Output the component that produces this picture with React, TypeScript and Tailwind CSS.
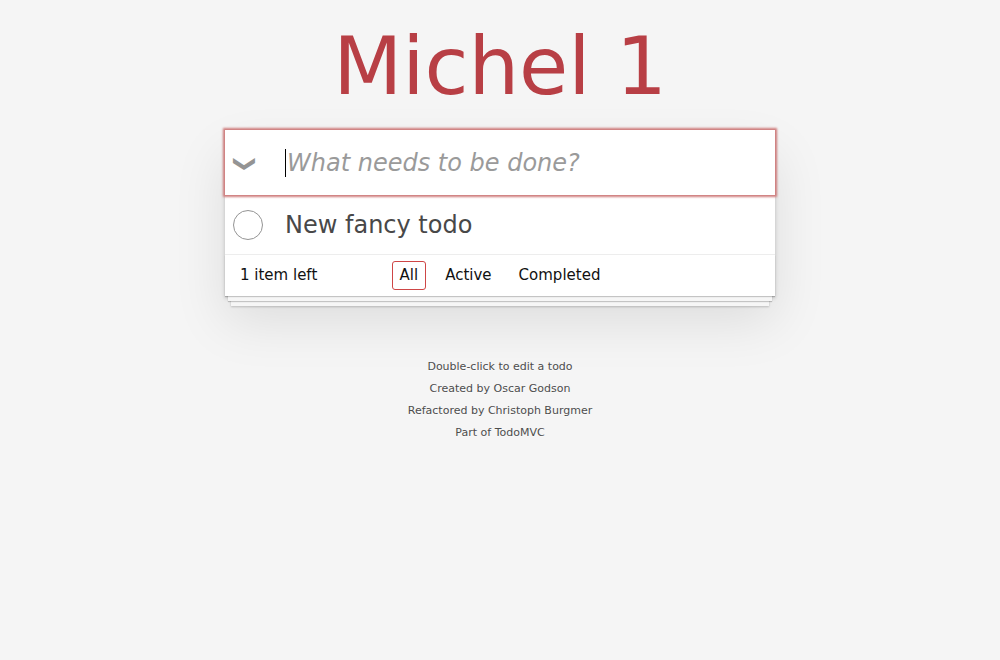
const font = "font-['DejaVu_Sans',sans-serif]";

function NewTodo() {
  return (
    <div className="flex h-[65px] items-center bg-white shadow-[0_0_2px_2px_#cf7d7d] relative z-10">
      <div className="flex w-[40px] justify-center pt-[2px]">
        <span className="inline-block rotate-90 text-[22px] leading-none text-[#949494]">❯</span>
      </div>
      <div className="flex items-center pl-[20px]">
        <span className="h-[28px] w-px bg-black" />
        <span className="ml-px text-[24px] italic text-[#9a9a9a]">What needs to be done?</span>
      </div>
    </div>
  );
}

function TodoItem({ title }: { title: string }) {
  return (
    <li className="flex h-[60px] items-center border-b border-[#ededed]">
      <div className="pl-[8px]">
        <div className="h-[30px] w-[30px] rounded-full border border-[#949494]" />
      </div>
      <span className="pl-[22px] text-[24px] text-[#484848]">{title}</span>
    </li>
  );
}

function Footer() {
  const filters = ["All", "Active", "Completed"];
  return (
    <footer className="grid h-[41px] grid-cols-[1fr_auto_1fr] items-center px-[15px] text-[15px] text-[#111] shadow-[0_1px_1px_rgba(0,0,0,0.2),0_8px_0_-3px_#f6f6f6,0_9px_1px_-3px_rgba(0,0,0,0.2),0_16px_0_-6px_#f6f6f6,0_17px_2px_-6px_rgba(0,0,0,0.2)]">
      <span>1 item left</span>
      <ul className="flex gap-[11px]">
        {filters.map((f, i) => (
          <li key={f}>
            <a
              className={
                i === 0
                  ? "block rounded-[3px] border border-[#ce4646] px-[7px] py-[2px]"
                  : "block rounded-[3px] border border-transparent px-[7px] py-[2px]"
              }
            >
              {f}
            </a>
          </li>
        ))}
      </ul>
      <span />
    </footer>
  );
}

export default function App() {
  return (
    <div className={`min-h-[660px] bg-[#f5f5f5] ${font}`}>
      <div className="mx-auto flex w-[550px] flex-col items-center">
        <h1 className="mt-[27px] text-[80px] leading-none text-[#b83f45]">Michel 1</h1>
        <section className="mt-[23px] w-full bg-white shadow-[0_2px_4px_0_rgba(0,0,0,0.2),0_25px_50px_0_rgba(0,0,0,0.1)]">
          <NewTodo />
          <ul>
            <TodoItem title="New fancy todo" />
          </ul>
          <Footer />
        </section>
        <div className="mt-[60px] text-center text-[11px] leading-[22px] text-[#4d4d4d] [text-shadow:0_1px_0_rgba(255,255,255,0.5)]">
          <p>Double-click to edit a todo</p>
          <p>Created by Oscar Godson</p>
          <p>Refactored by Christoph Burgmer</p>
          <p>Part of TodoMVC</p>
        </div>
      </div>
    </div>
  );
}
